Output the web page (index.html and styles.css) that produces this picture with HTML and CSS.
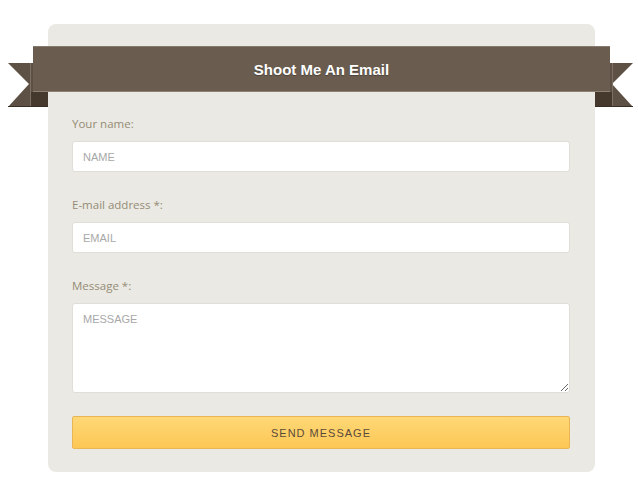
FILE: index.html
```html
<!DOCTYPE html>
<html>
<head>
<meta charset="utf-8">
<link rel="stylesheet" href="styles.css">
</head>
<body>
<div class="card">
  <div class="ribbon">
    <svg class="tail tail-left" width="40" height="44" viewBox="0 0 40 44">
      <polygon points="0,0 40,0 40,44 0,44 21,21" fill="#5d5044"/>
      <line x1="22.5" y1="0" x2="22.5" y2="44" stroke="#7d7063" stroke-width="1"/>
      <polygon points="23,29 40,29 40,44 23,44" fill="#45382c"/>
      <line x1="0" y1="43.5" x2="40" y2="43.5" stroke="#3a2d22" stroke-width="1"/>
    </svg>
    <h2 class="title">Shoot Me An Email</h2>
    <svg class="tail tail-right" width="38" height="44" viewBox="0 0 38 44">
      <polygon points="0,0 38,0 17,21 38,44 0,44" fill="#5d5044"/>
      <line x1="17.5" y1="0" x2="17.5" y2="44" stroke="#7d7063" stroke-width="1"/>
      <polygon points="0,29 17,29 17,44 0,44" fill="#45382c"/>
      <line x1="0" y1="43.5" x2="38" y2="43.5" stroke="#3a2d22" stroke-width="1"/>
    </svg>
  </div>
  <form class="form">
    <div class="field">
      <label class="label">Your name:</label>
      <input class="input" type="text" placeholder="NAME">
    </div>
    <div class="field">
      <label class="label">E-mail address *:</label>
      <input class="input" type="text" placeholder="EMAIL">
    </div>
    <div class="field">
      <label class="label">Message *:</label>
      <textarea class="input textarea" placeholder="MESSAGE"></textarea>
    </div>
    <button class="button" type="button">SEND MESSAGE</button>
  </form>
</div>
</body>
</html>
```

FILE: styles.css
```css
html, body {
  margin: 0;
  padding: 0;
  background: #ffffff;
}
body {
  width: 638px;
  height: 486px;
  overflow: hidden;
}
.card {
  position: relative;
  z-index: 0;
  margin: 24px 0 0 48px;
  width: 547px;
  height: 448px;
  box-sizing: border-box;
  background: #eae9e3;
  border-radius: 8px;
  padding-top: 22px;
}
.ribbon {
  position: relative;
  margin: 0 -15px;
  height: 46px;
  box-sizing: border-box;
  background: #6a5d50;
  border-top: 1px solid #857a6d;
  border-bottom: 1px solid #8c8273;
  display: flex;
  align-items: center;
  justify-content: center;
}
.tail {
  position: absolute;
  top: 16px;
  z-index: -1;
}
.tail-left { left: -25px; }
.tail-right { right: -23px; }
.title {
  margin: 0;
  font-family: "Liberation Sans", Arial, sans-serif;
  font-weight: bold;
  font-size: 15px;
  color: #ffffff;
  text-shadow: 0 1px 1px rgba(0,0,0,0.3);
}
.form {
  display: flex;
  flex-direction: column;
  padding: 24px 25px 0 24px;
  gap: 25px;
}
.field {
  display: flex;
  flex-direction: column;
  gap: 9px;
}
.label {
  font-family: "Open Sans", "DejaVu Sans", sans-serif;
  font-size: 11.5px;
  line-height: 16px;
  height: 16px;
  color: #958c76;
}
.input {
  display: block;
  box-sizing: border-box;
  width: 100%;
  height: 31px;
  border: 1px solid #e0ded6;
  border-radius: 3px;
  background: #ffffff;
  padding: 0 10px;
  font-family: "Liberation Sans", Arial, sans-serif;
  font-size: 11px;
  color: #555;
  outline: none;
}
.input::placeholder {
  color: #a8a8a8;
}
.textarea {
  height: 90px;
  padding: 9px 10px;
  resize: vertical;
}
.field + .button { margin-top: -2px; }
.button {
  display: block;
  width: 100%;
  height: 33px;
  box-sizing: border-box;
  border: 1px solid #eab554;
  border-radius: 2px;
  background: linear-gradient(to bottom, #fed877 0%, #fdc754 100%);
  font-family: "Liberation Sans", Arial, sans-serif;
  font-size: 11px;
  letter-spacing: 1px;
  color: #5b4a3a;
  padding: 0;
}
```
